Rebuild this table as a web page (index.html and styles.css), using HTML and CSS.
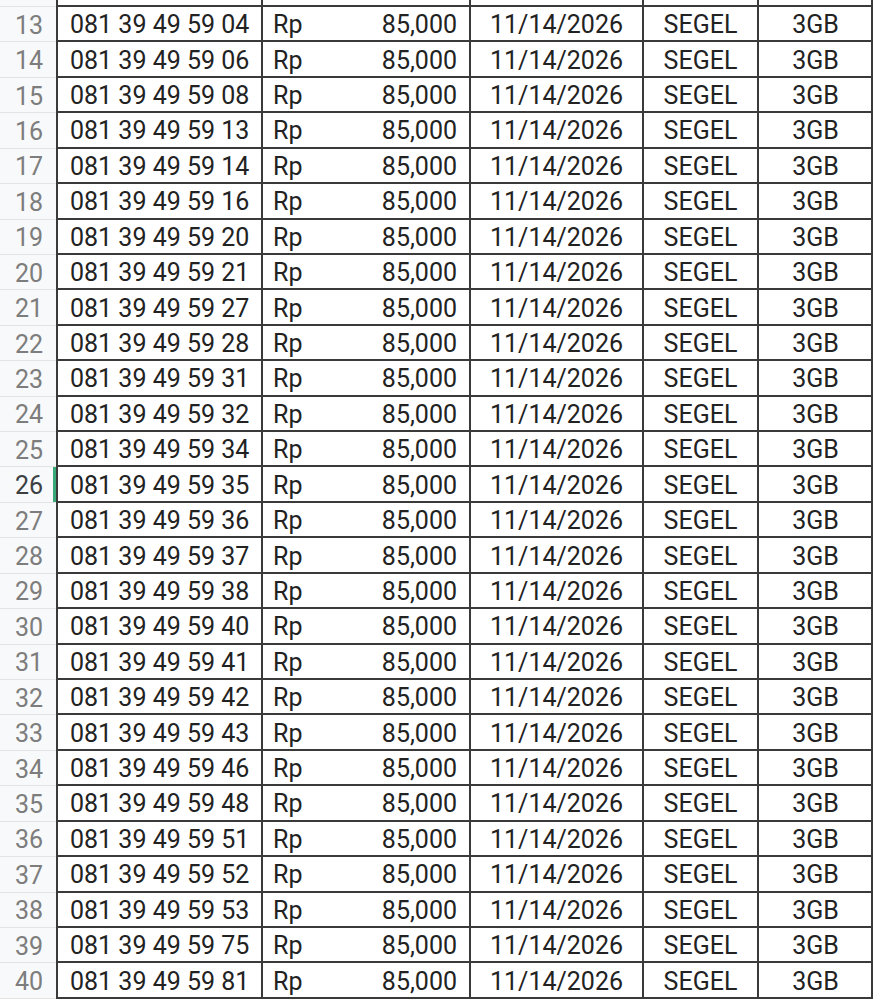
FILE: index.html
```html
<!DOCTYPE html>
<html lang="id">
<head>
<meta charset="utf-8">
<title>Sheet</title>
<link rel="stylesheet" href="styles.css">
</head>
<body>
<div class="sheet" id="sheet">
  <div class="row strip">
    <div class="rh"></div><div class="c first"></div><div class="c"></div><div class="c"></div><div class="c"></div><div class="c"></div>
  </div>
</div>
<script src="app.js"></script>
</body>
</html>
```
FILE: styles.css
```css
html, body {
  margin: 0;
  padding: 0;
  background: #ffffff;
}
body {
  font-family: Roboto, "Liberation Sans", Arial, sans-serif;
  color: #222222;
  overflow: hidden;
}
.sheet {
  display: flex;
  flex-direction: column;
  width: 873px;
}
.row {
  display: grid;
  grid-template-columns: 56px 207px 208px 173px 115px 114px;
  height: 35.43px;
}
.row.strip {
  height: 7px;
}
.rh {
  background: #f8f9fa;
  border-bottom: 1px solid #e3e3e3;
  color: #7d7d7d;
  font-size: 25px;
  display: flex;
  align-items: center;
  justify-content: flex-end;
  padding-right: 13px;
  padding-top: 2px;
  position: relative;
}
.rh.sel {
  color: #3c4043;
}
.rh.sel::after {
  content: "";
  position: absolute;
  right: 0;
  top: 0;
  bottom: 0;
  width: 3px;
  background: #3aa97a;
}
.c {
  border-right: 2px solid #3a3a3a;
  border-bottom: 2px solid #3a3a3a;
  font-size: 25px;
  display: flex;
  align-items: center;
  white-space: nowrap;
  overflow: hidden;
  padding-top: 2px;
}
.c.first,
.c.phone {
  border-left: 2px solid #3a3a3a;
}
.c.phone {
  padding-left: 12px;
}
.c.amt {
  justify-content: space-between;
  padding-left: 10px;
  padding-right: 12px;
}
.c.center {
  justify-content: center;
}
.c.gb {
  justify-content: center;
  padding-left: 1px;
}
```
FILE: app.js
```js
var phones = ["04","06","08","13","14","16","20","21","27","28","31","32","34","35","36","37","38","40","41","42","43","46","48","51","52","53","75","81"];
var sheet = document.getElementById("sheet");
phones.forEach(function (p, i) {
  var n = 13 + i;
  var row = document.createElement("div");
  row.className = "row";
  row.innerHTML =
    '<div class="rh' + (n === 26 ? ' sel' : '') + '">' + n + '</div>' +
    '<div class="c phone">081 39 49 59 ' + p + '</div>' +
    '<div class="c amt"><span>Rp</span><span>85,000</span></div>' +
    '<div class="c center">11/14/2026</div>' +
    '<div class="c center">SEGEL</div>' +
    '<div class="c gb">3GB</div>';
  sheet.appendChild(row);
});
```
